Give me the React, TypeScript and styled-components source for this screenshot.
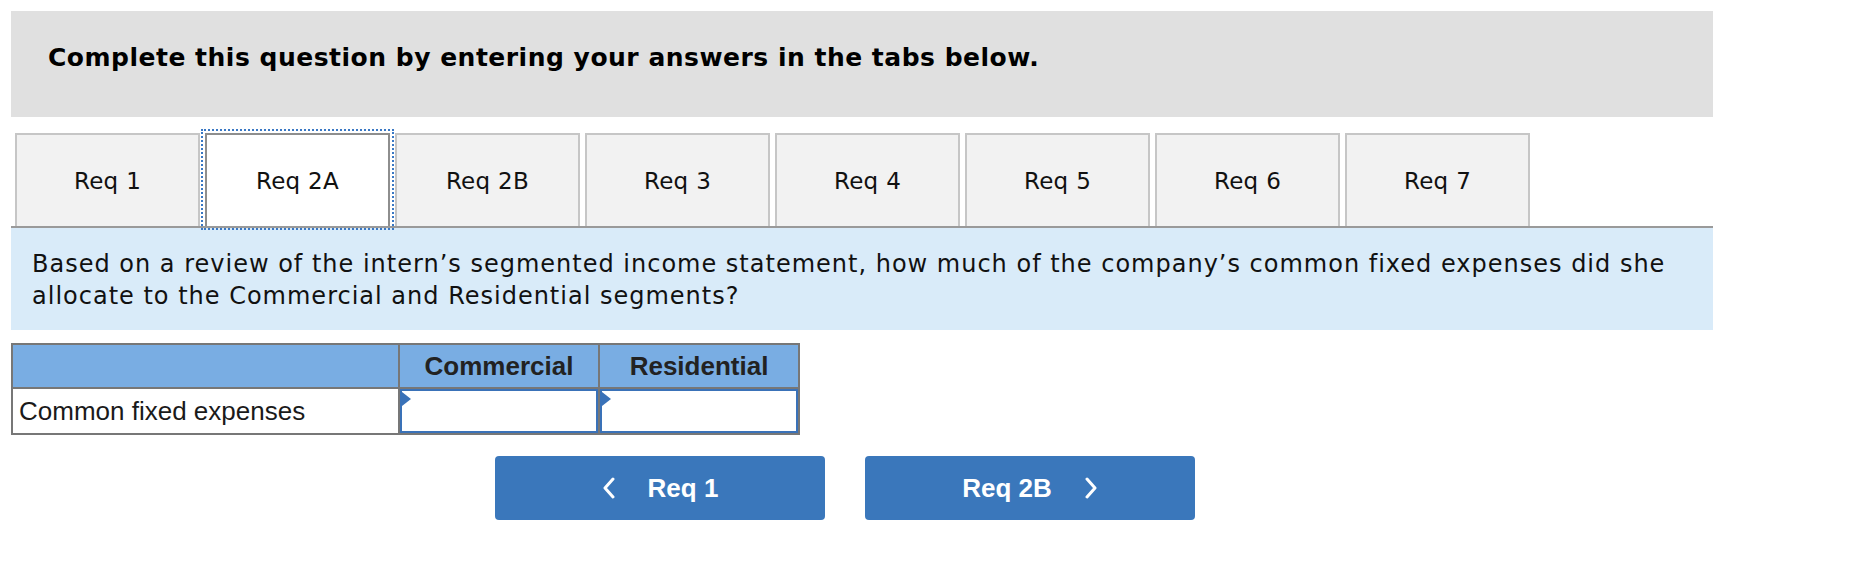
import styled, { createGlobalStyle } from "styled-components";

const GlobalStyle = createGlobalStyle`
  html, body {
    margin: 0;
    padding: 0;
    background: #ffffff;
  }
  body {
    font-family: "DejaVu Sans", Verdana, sans-serif;
    color: #111;
  }
`;

const Page = styled.div`
  width: 1702px;
  padding: 11px 0 0 11px;
`;

const Header = styled.div`
  height: 106px;
  box-sizing: border-box;
  padding: 32px 37px 0;
  background: #e0e0e0;
`;

const Title = styled.h1`
  margin: 0;
  font-size: 25px;
  font-weight: bold;
  letter-spacing: 0.5px;
  line-height: 30px;
  color: #000;
`;

const TabBar = styled.div`
  display: flex;
  gap: 5px;
  margin-top: 16px;
  padding-left: 4px;
  border-bottom: 2px solid #9a9a9a;
`;

const Tab = styled.button<{ $active?: boolean }>`
  width: 185px;
  height: 93px;
  box-sizing: border-box;
  margin: 0;
  font-family: "DejaVu Sans", Verdana, sans-serif;
  font-size: 23px;
  letter-spacing: 0.3px;
  color: #111;
  background: ${(p) => (p.$active ? "#ffffff" : "#f2f2f2")};
  border: 2px solid ${(p) => (p.$active ? "#8e8e8e" : "#c6c6c6")};
  border-bottom: none;
  outline: ${(p) => (p.$active ? "2px dotted #3a78c4" : "none")};
  outline-offset: 2px;
  cursor: pointer;
`;

const Prompt = styled.div`
  background: #d9ebf9;
  padding: 20px 21px 18px;
`;

const PromptText = styled.p`
  margin: 0;
  font-size: 24px;
  letter-spacing: 1px;
  line-height: 32px;
  color: #111;
`;

const Table = styled.table`
  margin-top: 13px;
  border-collapse: collapse;
  font-family: "Liberation Sans", Arial, sans-serif;
  font-size: 26px;
  color: #222;
`;

const HeadCell = styled.th<{ $w: number }>`
  width: ${(p) => p.$w}px;
  height: 44px;
  padding: 0;
  box-sizing: border-box;
  background: #79ade3;
  border: 2px solid #777;
  font-weight: bold;
  text-align: center;
`;

const LabelCell = styled.td`
  height: 44px;
  padding: 0 6px;
  border: 2px solid #777;
  text-align: left;
  color: #1a1a1a;
`;

const InputCell = styled.td`
  padding: 0;
  border: 2px solid #777;
`;

const AnswerBox = styled.div`
  position: relative;
  height: 44px;
  box-sizing: border-box;
  border: 2px solid #3a72b8;
  background: #fff;

  &::before {
    content: "";
    position: absolute;
    top: 1px;
    left: 0;
    border-top: 7px solid transparent;
    border-bottom: 7px solid transparent;
    border-left: 9px solid #3a72b8;
  }
`;

const Nav = styled.div`
  display: flex;
  gap: 40px;
  margin-top: 21px;
  padding-left: 484px;
`;

const NavButton = styled.button`
  display: flex;
  align-items: center;
  justify-content: center;
  gap: 32px;
  width: 330px;
  height: 64px;
  border: none;
  border-radius: 4px;
  background: #3a77bb;
  color: #fff;
  font-family: "Liberation Sans", Arial, sans-serif;
  font-size: 26px;
  font-weight: bold;
  cursor: pointer;
`;

const Chevron = ({ dir }: { dir: "left" | "right" }) => (
  <svg width="14" height="22" viewBox="0 0 14 22" fill="none">
    <path
      d={dir === "left" ? "M11 2 L3 11 L11 20" : "M3 2 L11 11 L3 20"}
      stroke="#fff"
      strokeWidth="3"
      strokeLinecap="round"
      strokeLinejoin="round"
    />
  </svg>
);

const tabs = ["Req 1", "Req 2A", "Req 2B", "Req 3", "Req 4", "Req 5", "Req 6", "Req 7"];

export default function App() {
  return (
    <Page>
      <GlobalStyle />
      <Header>
        <Title>Complete this question by entering your answers in the tabs below.</Title>
      </Header>
      <TabBar>
        {tabs.map((t) => (
          <Tab key={t} $active={t === "Req 2A"}>
            {t}
          </Tab>
        ))}
      </TabBar>
      <Prompt>
        <PromptText>
          Based on a review of the intern’s segmented income statement, how much of the company’s
          common fixed expenses did she allocate to the Commercial and Residential segments?
        </PromptText>
      </Prompt>
      <Table>
        <thead>
          <tr>
            <HeadCell $w={387} />
            <HeadCell $w={200}>Commercial</HeadCell>
            <HeadCell $w={200}>Residential</HeadCell>
          </tr>
        </thead>
        <tbody>
          <tr>
            <LabelCell>Common fixed expenses</LabelCell>
            <InputCell>
              <AnswerBox />
            </InputCell>
            <InputCell>
              <AnswerBox />
            </InputCell>
          </tr>
        </tbody>
      </Table>
      <Nav>
        <NavButton>
          <Chevron dir="left" />
          Req 1
        </NavButton>
        <NavButton>
          Req 2B
          <Chevron dir="right" />
        </NavButton>
      </Nav>
    </Page>
  );
}
